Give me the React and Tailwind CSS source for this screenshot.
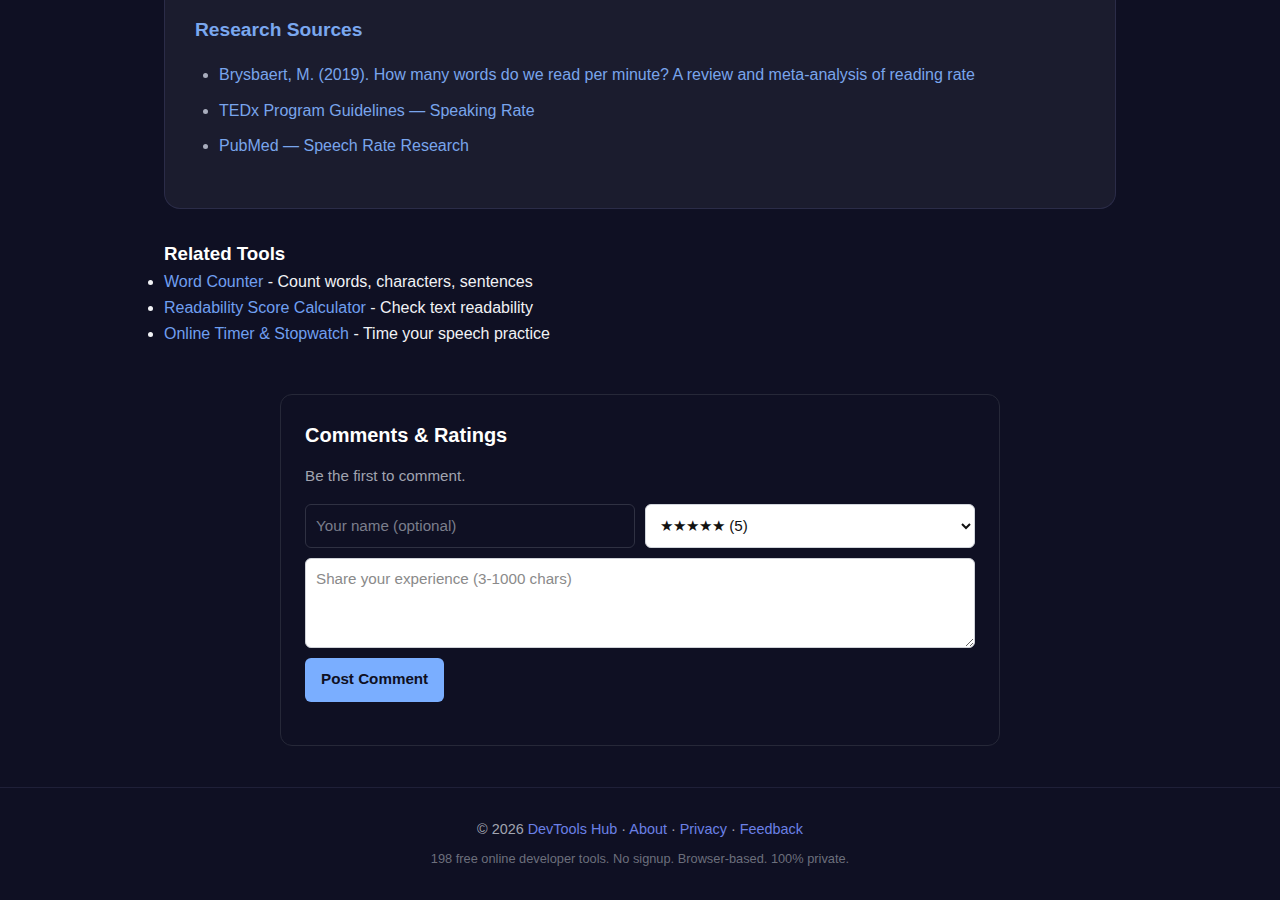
const sources = [
  "Brysbaert, M. (2019). How many words do we read per minute? A review and meta-analysis of reading rate",
  "TEDx Program Guidelines — Speaking Rate",
  "PubMed — Speech Rate Research",
];

const related = [
  { name: "Word Counter", desc: "Count words, characters, sentences" },
  { name: "Readability Score Calculator", desc: "Check text readability" },
  { name: "Online Timer & Stopwatch", desc: "Time your speech practice" },
];

export default function App() {
  return (
    <div className="min-h-screen bg-[#0f1023] font-['Liberation_Sans',Arial,sans-serif] text-[#e5e7eb]">
      <main className="w-[952px] mx-auto">
        {/* research card, top scrolled out of view */}
        <section className="bg-[#1b1c2e] border border-t-0 border-[#2b2c48] rounded-b-2xl px-[30px] pt-[16px] pb-[38px]">
          <h2 className="text-[19.2px] leading-[28px] font-bold text-[#7aa7ef] mb-[19px]">Research Sources</h2>
          <ul className="pl-6 list-disc text-[#a9adbd]">
            {sources.map((s) => (
              <li key={s} className="text-[16px] leading-6 mb-[11.5px]">
                <a href="#" className="text-[#79a5ec]">{s}</a>
              </li>
            ))}
          </ul>
        </section>

        <h3 className="mt-[33px] text-[18.72px] leading-6 font-bold text-white">Related Tools</h3>
        <ul className="mt-[3px] list-disc text-[16px] leading-[26px] text-[#f1f2f5]">
          {related.map((r) => (
            <li key={r.name}>
              <a href="#" className="text-[#6f9ff0]">{r.name}</a> - {r.desc}
            </li>
          ))}
        </ul>

        <section className="mt-[47px] w-[720px] mx-auto border border-[#262838] rounded-xl px-6 pt-[25px] pb-6">
          <h2 className="text-[20px] leading-[30px] font-bold text-white">Comments &amp; Ratings</h2>
          <p className="mt-[15px] text-[15.2px] leading-[22px] text-[#a1a4b0]">Be the first to comment.</p>
          <div className="mt-[17px] mb-[19px] flex flex-col gap-[10px]">
            <div className="grid grid-cols-2 gap-[10px]">
              <input
                type="text"
                placeholder="Your name (optional)"
                className="h-11 px-[10px] rounded-md border border-[#2f3142] bg-transparent text-[15.2px] text-white placeholder:text-[#7b7e8c] outline-none"
              />
              <select className="h-11 pl-[10px] pr-2 rounded-md border border-[#d1d5db] bg-white text-[15.2px] text-[#111]">
                <option>★★★★★ (5)</option>
                <option>★★★★☆ (4)</option>
                <option>★★★☆☆ (3)</option>
                <option>★★☆☆☆ (2)</option>
                <option>★☆☆☆☆ (1)</option>
              </select>
            </div>
            <textarea
              placeholder="Share your experience (3-1000 chars)"
              className="h-[90px] px-[10px] py-[9px] rounded-md border border-[#cfd2d8] bg-white text-[15.2px] text-[#111] placeholder:text-[#8a8a8a] outline-none"
            />
            <div>
              <button className="h-11 px-4 rounded-md bg-[#7aaeff] text-[15.2px] font-bold text-[#0f1023]">Post Comment</button>
            </div>
          </div>
        </section>
      </main>

      <footer className="mt-[41px] border-t border-[#1f2038] pt-[31px] pb-[32px] text-center">
        <p className="text-[14.4px] leading-[21px] text-[#a1a4b0]">
          © 2026 <a href="#" className="text-[#6b80e6]">DevTools Hub</a> · <a href="#" className="text-[#6b80e6]">About</a> ·{" "}
          <a href="#" className="text-[#6b80e6]">Privacy</a> · <a href="#" className="text-[#6b80e6]">Feedback</a>
        </p>
        <p className="mt-[9px] text-[12.8px] leading-[19px] text-[#6c6f7c]">
          198 free online developer tools. No signup. Browser-based. 100% private.
        </p>
      </footer>
    </div>
  );
}
